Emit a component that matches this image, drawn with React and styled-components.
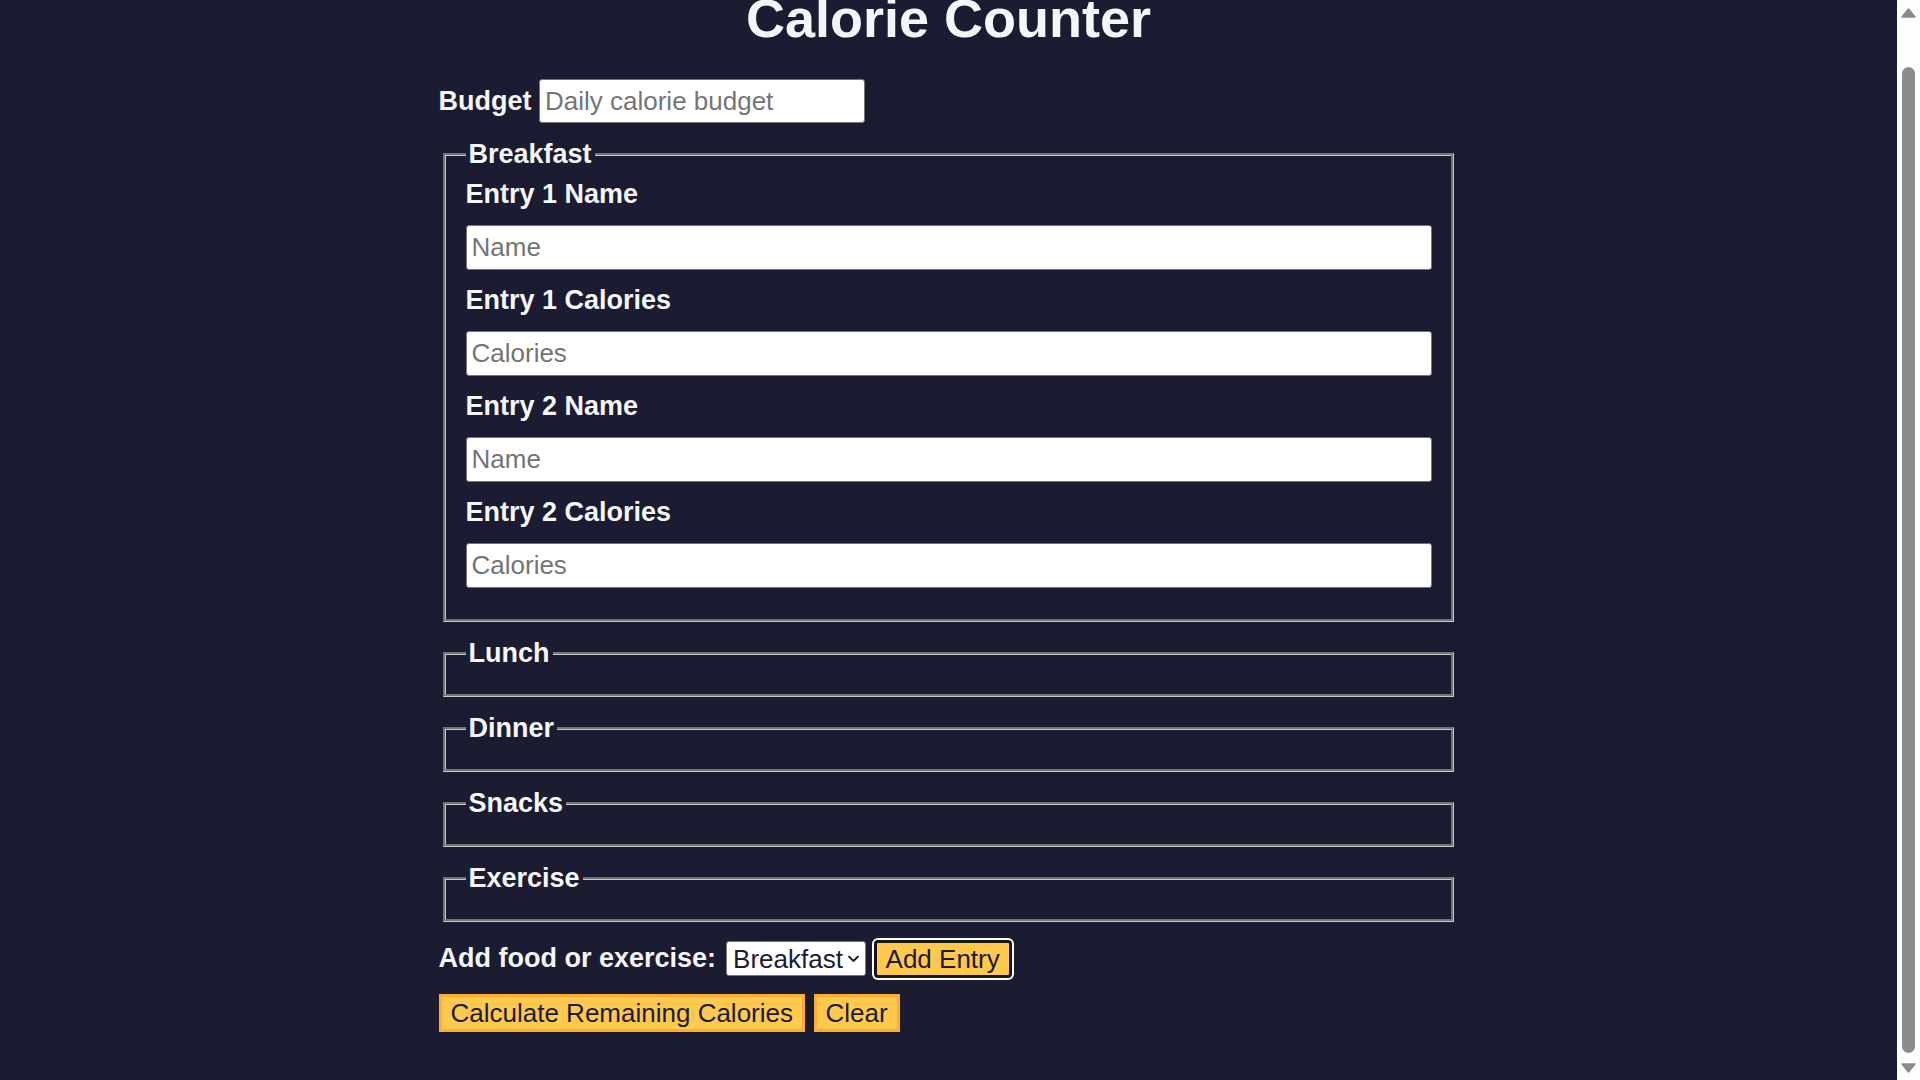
import React, { useLayoutEffect, useRef } from 'react';
import styled, { createGlobalStyle } from 'styled-components';

const GlobalStyle = createGlobalStyle`
  html, body {
    margin: 0;
    padding: 0;
    height: 100%;
    overflow: hidden;
    background: #1b1b32;
  }
  #root {
    height: 100%;
  }
`;

const Screen = styled.div`
  display: flex;
  width: 100%;
  height: 1080px;
  background: #1b1b32;
  color: #f5f6f7;
  font-family: "Liberation Sans", Arial, Helvetica, sans-serif;
`;

const Viewport = styled.main`
  flex: 1;
  height: 100%;
  overflow: hidden;
  box-sizing: border-box;
  padding: 0 18px 60px;
`;

const Title = styled.h1`
  margin: 30px auto;
  text-align: center;
  font-size: 54px;
  line-height: 62px;
  font-weight: bold;
`;

const Container = styled.div`
  width: 90%;
  max-width: 1020px;
  margin: 30px auto;
`;

const BudgetRow = styled.div`
  display: flex;
  align-items: baseline;
  gap: 7.5px;
`;

const Label = styled.label`
  display: block;
  font-size: 27px;
  line-height: ${p => (p.$inline ? '33px' : '31px')};
  font-weight: bold;
  margin-bottom: ${p => (p.$inline ? '0' : '15px')};
  white-space: nowrap;
`;

const TextInput = styled.input`
  box-sizing: border-box;
  width: ${p => p.$width || '100%'};
  height: ${p => p.$height || '45px'};
  margin: 0 0 15px;
  padding: 0 5px;
  border: 1px solid #767676;
  border-radius: 3px;
  background: #fff;
  color: #1b1b32;
  font-family: "Liberation Sans", Arial, sans-serif;
  font-size: 26px;
  outline: none;

  &::placeholder {
    color: #757575;
  }
`;

const Meal = styled.fieldset`
  min-width: 0;
  margin: 0 4.5px 15px;
  padding: 8px 19.5px 16px;
  border: 3px groove #c8c8c8;
`;

const MealTitle = styled.legend`
  padding: 0 3px;
  font-size: 27px;
  line-height: 33px;
  font-weight: bold;
`;

const EntryList = styled.div`
  display: flex;
  flex-direction: column;
`;

const Controls = styled.div`
  display: flex;
  align-items: center;
  gap: 7.5px;
  height: 43px;
  margin-bottom: 14px;
`;

const SelectWrap = styled.span`
  position: relative;
  display: inline-flex;
  margin-left: 2.5px;
`;

const Select = styled.select`
  appearance: none;
  box-sizing: border-box;
  width: 140px;
  height: 35px;
  padding: 0 12px 0 6px;
  border: 1px solid #767676;
  border-radius: 3px;
  background: #fff;
  color: #1b1b32;
  font-family: "Liberation Sans", Arial, sans-serif;
  font-size: 26px;
  outline: none;
`;

const Chevron = styled.svg`
  position: absolute;
  right: 7px;
  top: 50%;
  transform: translateY(-50%);
  pointer-events: none;
`;

const ButtonRow = styled.div`
  display: flex;
  gap: 8.5px;
`;

const ActionButton = styled.button`
  box-sizing: border-box;
  height: 38px;
  padding: 0 9px;
  border: 3px solid ${p => (p.$focused ? '#161616' : '#feac32')};
  border-radius: ${p => (p.$focused ? '4px' : '0')};
  box-shadow: ${p => (p.$focused ? '0 0 0 2px #ffffff' : 'none')};
  background: #fec94c;
  color: #1b1b32;
  font-family: "Liberation Sans", Arial, sans-serif;
  font-size: 26px;
  line-height: 1;
  white-space: nowrap;
  cursor: pointer;
`;

const ScrollRail = styled.div`
  flex: none;
  width: 23px;
  height: 100%;
  display: flex;
  flex-direction: column;
  background: #fdfdfd;
`;

const ScrollArrow = styled.div`
  flex: none;
  height: 25px;
  display: flex;
  align-items: center;
  justify-content: center;
`;

const ScrollTrack = styled.div`
  flex: 1;
  display: flex;
  justify-content: center;
  padding-top: 42px;
`;

const ScrollThumb = styled.div`
  width: 13px;
  height: 986px;
  border-radius: 7px;
  background: #8b8b8b;
`;

const meals = [
  { id: 'breakfast', name: 'Breakfast', entries: 2 },
  { id: 'lunch', name: 'Lunch', entries: 0 },
  { id: 'dinner', name: 'Dinner', entries: 0 },
  { id: 'snacks', name: 'Snacks', entries: 0 },
  { id: 'exercise', name: 'Exercise', entries: 0 },
];

const Entry = ({ meal, n }) => (
  <>
    <Label htmlFor={`${meal}-${n}-name`}>Entry {n} Name</Label>
    <TextInput type="text" id={`${meal}-${n}-name`} placeholder="Name" />
    <Label htmlFor={`${meal}-${n}-calories`}>Entry {n} Calories</Label>
    <TextInput type="number" min="0" id={`${meal}-${n}-calories`} placeholder="Calories" />
  </>
);

const App = () => {
  const viewRef = useRef(null);

  useLayoutEffect(() => {
    if (viewRef.current) viewRef.current.scrollTop = 43;
  }, []);

  return (
    <Screen>
      <GlobalStyle />
      <Viewport ref={viewRef}>
        <Title>Calorie Counter</Title>
        <Container>
          <form id="calorie-counter" onSubmit={e => e.preventDefault()}>
            <BudgetRow>
              <Label htmlFor="budget" $inline>Budget</Label>
              <TextInput
                type="number"
                min="0"
                id="budget"
                placeholder="Daily calorie budget"
                $width="326px"
                $height="44px"
              />
            </BudgetRow>

            {meals.map(meal => (
              <Meal key={meal.id} id={meal.id}>
                <MealTitle>{meal.name}</MealTitle>
                <EntryList>
                  {Array.from({ length: meal.entries }, (_, i) => (
                    <Entry key={i} meal={meal.id} n={i + 1} />
                  ))}
                </EntryList>
              </Meal>
            ))}

            <Controls>
              <Label htmlFor="entry-dropdown" $inline>Add food or exercise:</Label>
              <SelectWrap>
                <Select id="entry-dropdown" name="options" defaultValue="breakfast">
                  {meals.map(meal => (
                    <option key={meal.id} value={meal.id}>{meal.name}</option>
                  ))}
                </Select>
                <Chevron width="11" height="7" viewBox="0 0 11 7">
                  <path d="M1 1l4.5 4.5L10 1" fill="none" stroke="#1b1b32" strokeWidth="1.8" strokeLinecap="round" strokeLinejoin="round" />
                </Chevron>
              </SelectWrap>
              <ActionButton type="button" id="add-entry" $focused>Add Entry</ActionButton>
            </Controls>

            <ButtonRow>
              <ActionButton type="submit">Calculate Remaining Calories</ActionButton>
              <ActionButton type="button" id="clear">Clear</ActionButton>
            </ButtonRow>
          </form>
        </Container>
      </Viewport>

      <ScrollRail>
        <ScrollArrow>
          <svg width="15" height="10" viewBox="0 0 15 10">
            <path d="M7.5 1L14 9H1z" fill="#8a8a8a" stroke="#8a8a8a" strokeWidth="1.5" strokeLinejoin="round" />
          </svg>
        </ScrollArrow>
        <ScrollTrack>
          <ScrollThumb />
        </ScrollTrack>
        <ScrollArrow>
          <svg width="15" height="10" viewBox="0 0 15 10">
            <path d="M7.5 9L14 1H1z" fill="#8a8a8a" stroke="#8a8a8a" strokeWidth="1.5" strokeLinejoin="round" />
          </svg>
        </ScrollArrow>
      </ScrollRail>
    </Screen>
  );
};

export default App;
